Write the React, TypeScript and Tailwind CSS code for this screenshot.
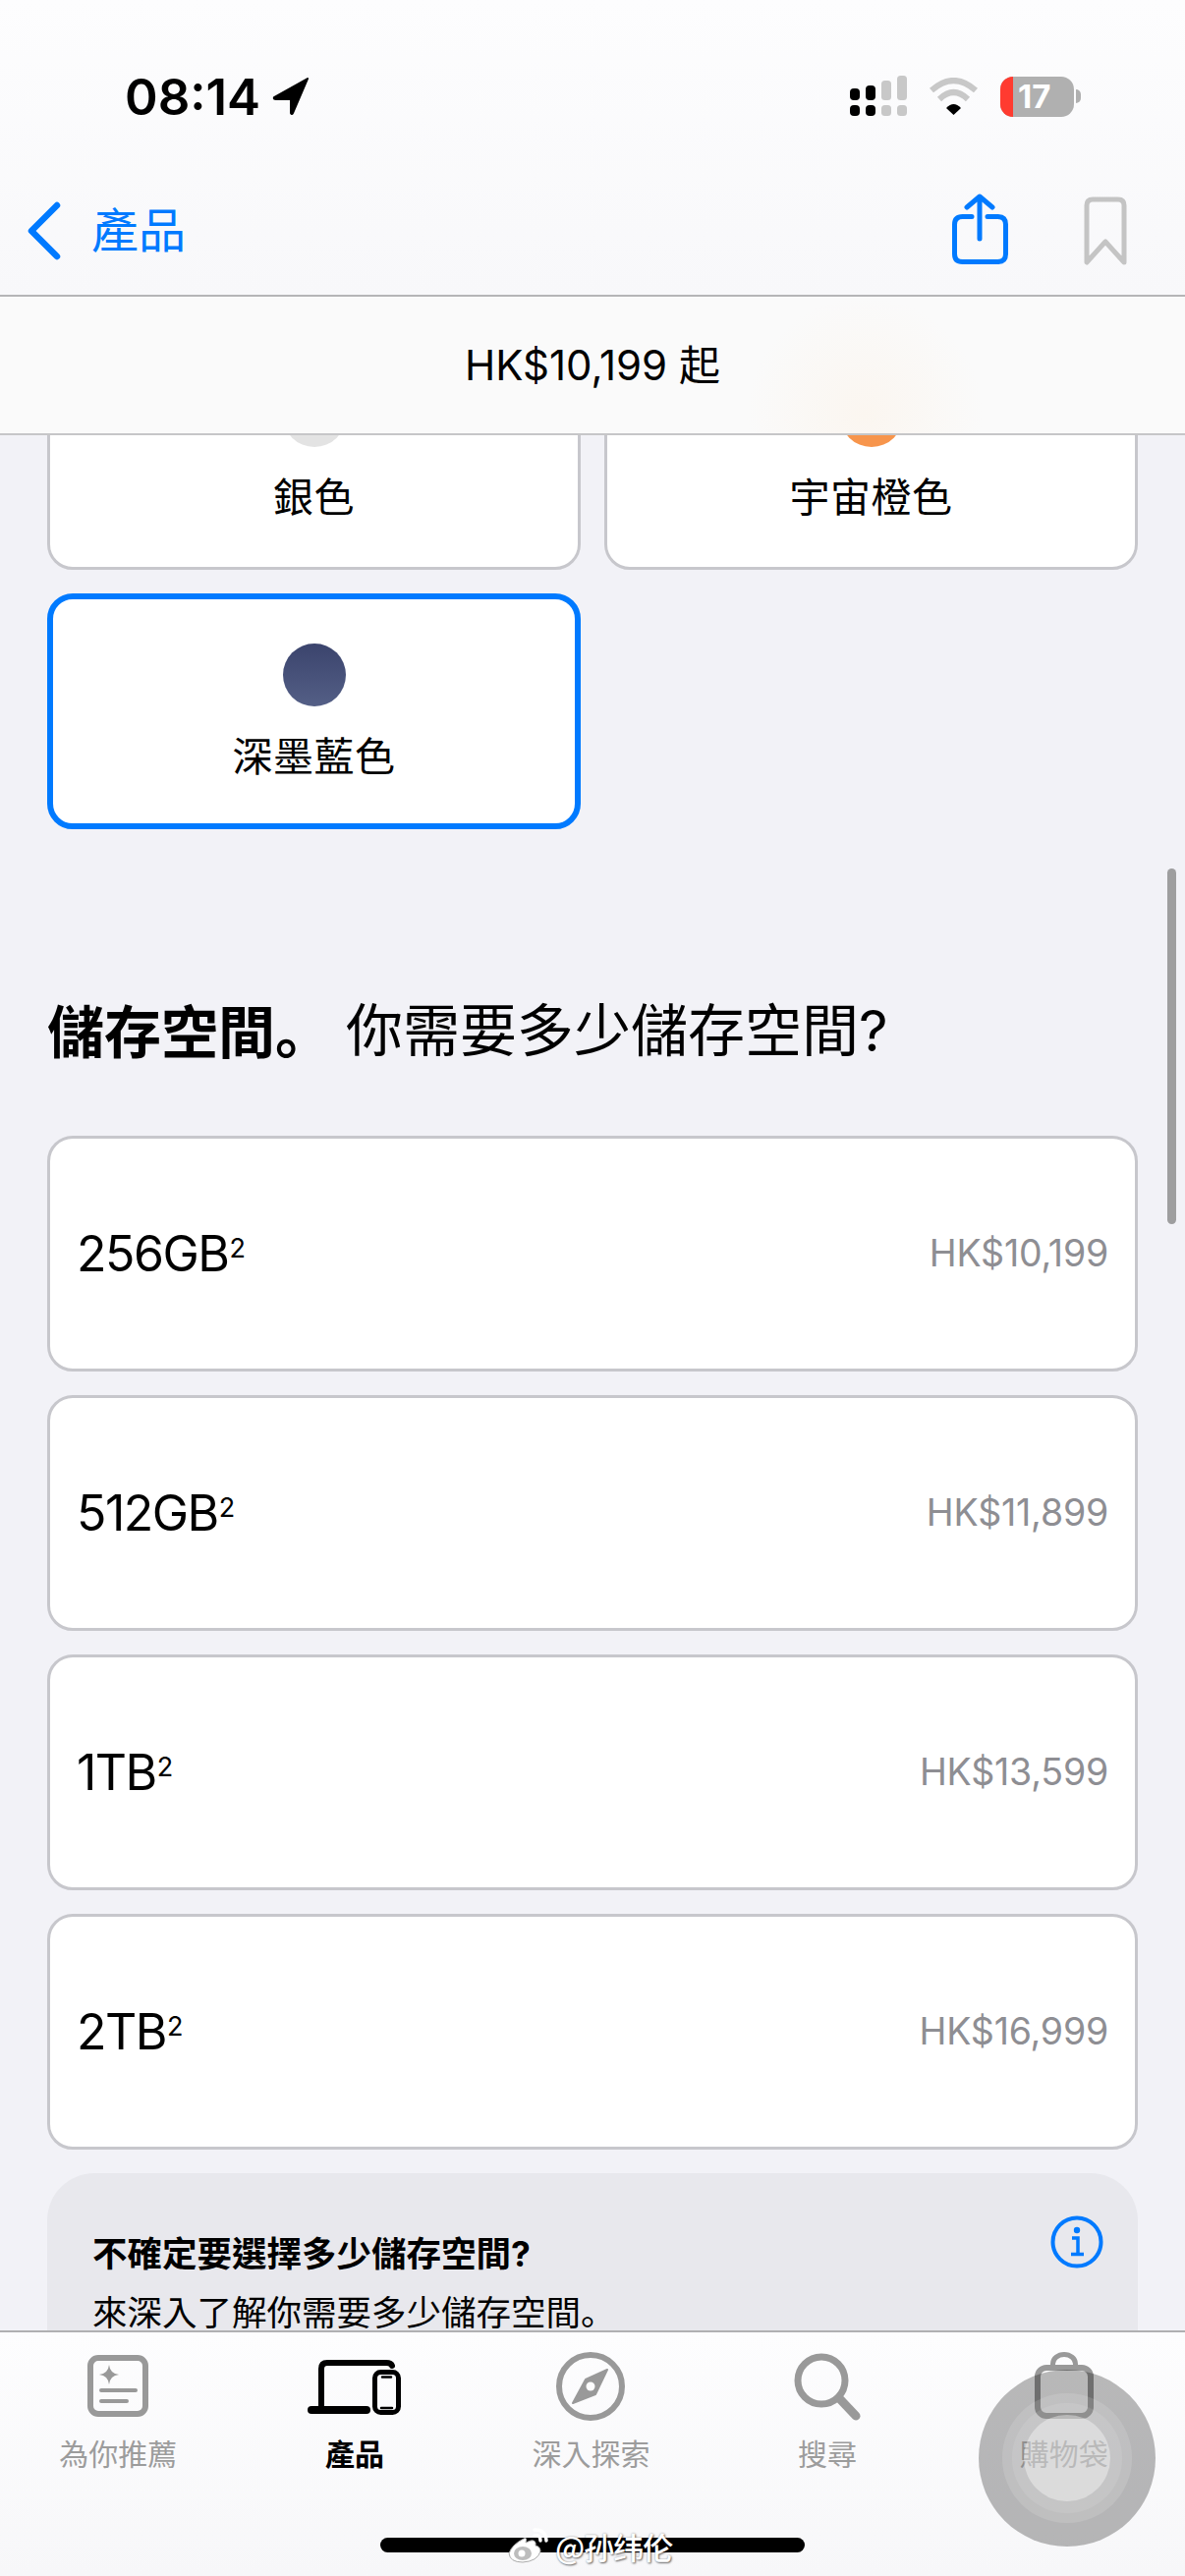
const COLORS = [
  { name: '銀色', swatch: 'bg-[#e3e3e3]' },
  { name: '宇宙橙色', swatch: 'bg-[#f7954c]' },
  { name: '深墨藍色', swatch: 'bg-gradient-to-b from-[#3b446d] to-[#545f86]', selected: true },
];

const STORAGE = [
  { size: '256GB', price: 'HK$10,199' },
  { size: '512GB', price: 'HK$11,899' },
  { size: '1TB', price: 'HK$13,599' },
  { size: '2TB', price: 'HK$16,999' },
];

function StatusBar() {
  return (
    <div className="mt-[72px] flex h-[52px] items-center justify-between pl-[127px] pr-[106px]">
      <div className="flex items-center gap-[12px]">
        <span className="text-[51px] font-semibold leading-none text-black">08:14</span>
        <svg className="h-[40px] w-[38px]" viewBox="0 0 38 40">
          <path d="M36 2 L2 21 Q1 23 4 23 L18 23 Q19 23 19 24 L19 37 Q20 39 21 37 Z" fill="#000" stroke="#000" strokeWidth="2" strokeLinejoin="round" />
        </svg>
      </div>
      <div className="flex items-center">
        <svg className="h-[42px] w-[58px]" viewBox="0 0 58 42">
          <rect x="0" y="13" width="10" height="12" rx="4" fill="#000" />
          <rect x="16" y="10" width="10" height="15" rx="4" fill="#000" />
          <rect x="32" y="5" width="10" height="20" rx="3.5" fill="#c8c8c8" />
          <rect x="48" y="0" width="10" height="25" rx="3.5" fill="#c8c8c8" />
          <rect x="0" y="30" width="10" height="11" rx="4" fill="#000" />
          <rect x="16" y="30" width="10" height="11" rx="4" fill="#000" />
          <rect x="32" y="30" width="10" height="11" rx="3.5" fill="#c8c8c8" />
          <rect x="48" y="30" width="10" height="11" rx="3.5" fill="#c8c8c8" />
        </svg>
        <svg className="ml-[22px] h-[38px] w-[51px]" viewBox="0 0 51 38">
          <path d="M3 13 Q25.5 -7 48 13" fill="none" stroke="#c8c8c8" strokeWidth="6" />
          <path d="M11 22 Q25.5 8 40 22" fill="none" stroke="#c8c8c8" strokeWidth="6" />
          <path d="M18 31 Q25.5 23 33 31 L25.5 38 Z" fill="#000" />
        </svg>
        <div className="ml-[22px] flex h-[41px] w-[75px] overflow-hidden rounded-[13px] bg-[#b0b0b0]">
          <div className="w-[13px] bg-[#ff3b30]" />
          <span className="pl-[5px] text-[33px] font-bold leading-[41px] text-white">17</span>
        </div>
        <div className="ml-[2px] h-[14px] w-[5px] rounded-r-full bg-[#b0b0b0]" />
      </div>
    </div>
  );
}

function NavBar() {
  return (
    <div className="mt-[66px] flex h-[90px] items-center justify-between pl-[27px] pr-[58px]">
      <div className="flex items-center">
        <svg className="h-[60px] w-[36px]" viewBox="0 0 36 60">
          <path d="M31 4 L5 30 L31 56" fill="none" stroke="#007aff" strokeWidth="6.5" strokeLinecap="round" strokeLinejoin="round" />
        </svg>
        <span className="ml-[30px] text-[48px] leading-none text-[#007aff]">產品</span>
      </div>
      <div className="flex items-center gap-[76px]">
        <svg className="h-[76px] w-[62px]" viewBox="0 0 62 76">
          <path d="M25 23.500 H15.500 Q7.500 23.500 7.500 31.500 V61.500 Q7.500 69.500 15.500 69.500 H51.500 Q59.500 69.500 59.500 61.500 V31.500 Q59.500 23.500 51.500 23.500 H41" fill="none" stroke="#007aff" strokeWidth="5" strokeLinecap="round" />
          <path d="M33 46 V3 M20 14 L33 3 L46 14" fill="none" stroke="#007aff" strokeWidth="5" strokeLinecap="round" strokeLinejoin="round" />
        </svg>
        <svg className="h-[72px] w-[46px]" viewBox="0 0 46 72">
          <path d="M4 68 V10 Q4 4 10 4 H36 Q42 4 42 10 V68 L23 47 Z" fill="none" stroke="#c4c4c4" strokeWidth="5" strokeLinecap="round" strokeLinejoin="round" />
        </svg>
      </div>
    </div>
  );
}

function ColorCard({ name, swatch, selected }: { name: string; swatch: string; selected?: boolean }) {
  return (
    <div
      className={
        selected
          ? 'flex h-[240px] flex-col items-center rounded-[26px] border-[6px] border-[#007aff] bg-white pt-[45px]'
          : 'flex h-[240px] flex-col items-center rounded-[26px] border-[3px] border-[#c7c7cc] bg-white pt-[48px]'
      }
    >
      <div className={`h-[64px] w-[64px] rounded-full ${swatch}`} />
      <span className="mt-[23px] text-[41px] leading-[56px] tracking-[0.5px] text-black">{name}</span>
    </div>
  );
}

function StorageCard({ size, price }: { size: string; price: string }) {
  return (
    <div className="flex h-[240px] items-center justify-between rounded-[26px] border-[3px] border-[#c7c7cc] bg-white pl-[27px] pr-[27px]">
      <span className="text-[50px] leading-none tracking-[-1.5px] text-black">
        {size}
        <sup className="top-0 ml-[1px] align-[14px] text-[27px] leading-none tracking-normal">2</sup>
      </span>
      <span className="text-[37.5px] leading-none tracking-[-0.2px] text-[#8e8e93]">{price}</span>
    </div>
  );
}

function TabIcon({ children }: { children: React.ReactNode }) {
  return (
    <svg className="h-[72px] w-[100px]" viewBox="0 0 100 72">
      {children}
    </svg>
  );
}

function Tab({ label, active, children }: { label: string; active?: boolean; children: React.ReactNode }) {
  return (
    <div className="flex flex-col items-center">
      <TabIcon>{children}</TabIcon>
      <span className={active ? 'mt-[14px] text-[30px] font-semibold leading-[36px] text-black' : 'mt-[14px] text-[30px] leading-[36px] text-[#9c9c9c]'}>
        {label}
      </span>
    </div>
  );
}

function TabBar() {
  return (
    <div className="relative z-10 h-[250px] shrink-0 border-t-2 border-[#b0b0b2] bg-gradient-to-b from-[#fdfdfe] to-[#f7f7f9] pt-[20px]">
      <div className="grid grid-cols-5 pr-[3px]">
        <Tab label="為你推薦">
          <rect x="22" y="6" width="56" height="57" rx="8" fill="none" stroke="#999" strokeWidth="6" />
          <path d="M41 13 Q42 22 51 23 Q42 24 41 33 Q40 24 31 23 Q40 22 41 13 Z" fill="#999" />
          <path d="M33 39 H68 M33 50 H59" stroke="#999" strokeWidth="4" strokeLinecap="round" />
        </Tab>
        <Tab label="產品" active>
          <path d="M16 56 V17 Q16 11 22 11 H82 Q87 11 88 14" fill="none" stroke="#000" strokeWidth="6" strokeLinecap="round" />
          <path d="M6 59 H62" stroke="#000" strokeWidth="8" strokeLinecap="round" />
          <rect x="70.5" y="20.5" width="24" height="41" rx="6" fill="none" stroke="#000" strokeWidth="5" />
          <path d="M78 25.5 H87 M77 57 H88" stroke="#000" strokeWidth="2.5" strokeLinecap="round" />
        </Tab>
        <Tab label="深入探索">
          <circle cx="50" cy="35" r="32" fill="none" stroke="#999" strokeWidth="6" />
          <path d="M67 18 L45 28 L32 52 L55 43 Z" fill="#999" stroke="#999" strokeWidth="2" strokeLinejoin="round" />
          <circle cx="50" cy="35" r="4.5" fill="#fdfdfe" />
        </Tab>
        <Tab label="搜尋">
          <circle cx="44" cy="29" r="24" fill="none" stroke="#999" strokeWidth="7" />
          <path d="M62 47 L79 65" stroke="#999" strokeWidth="9" strokeLinecap="round" />
        </Tab>
        <Tab label="購物袋">
          <rect x="23" y="16" width="54" height="49" rx="9" fill="none" stroke="#999" strokeWidth="6" />
          <path d="M38.500 14 V12 A11.500 9.500 0 0 1 61.500 12 V14" fill="none" stroke="#999" strokeWidth="5" />
        </Tab>
      </div>
      {/* home indicator */}
      <div className="absolute left-[387px] top-[209px] h-[15px] w-[432px] rounded-full bg-black" />
    </div>
  );
}

// assistive touch button floating over the tab bar
function FloatingButton() {
  return (
    <div className="absolute left-[996px] top-[2412px] z-20 flex h-[180px] w-[180px] items-center justify-center rounded-full bg-black/[0.27]">
      <div className="flex h-[132px] w-[132px] items-center justify-center rounded-full bg-white/[0.13]">
        <div className="flex h-[112px] w-[112px] items-center justify-center rounded-full bg-white/[0.1]">
          <div className="h-[88px] w-[88px] rounded-full bg-white/[0.38]" />
        </div>
      </div>
    </div>
  );
}

function Watermark() {
  return (
    <div className="absolute left-[517px] top-[2572px] z-20 flex items-center">
      <svg className="h-[38px] w-[42px]" viewBox="0 0 42 38">
        <path d="M27 3 Q38 2 39 14 M27 9 Q33 8 33 14" fill="none" stroke="#fff" strokeWidth="3.500" strokeLinecap="round" />
        <path d="M16 12 Q4 18 1 27 Q2 36 15 36 Q30 35 33 25 Q33 20 28 19 Q29 13 23 14 L18 16 Q20 10 16 12 Z" fill="#fff" stroke="#aaa" strokeWidth="1" />
        <ellipse cx="15" cy="27" rx="9" ry="7" fill="#bdbdbd" />
        <circle cx="14" cy="27" r="3.500" fill="#fff" />
      </svg>
      <span className="ml-[6px] text-[31px] font-medium leading-none tracking-[-1px] text-white [font-family:'Noto_Sans_CJK_SC',sans-serif] [text-shadow:1px_1px_2px_rgba(0,0,0,0.55),0_0_2px_rgba(0,0,0,0.35)]">
        @孙纬伦
      </span>
    </div>
  );
}

export default function App() {
  return (
    <div className="relative flex h-[2622px] w-[1206px] flex-col overflow-hidden bg-[#f2f2f7] [font-family:Inter,'Noto_Sans_CJK_TC',sans-serif]">
      <header className="relative z-10 shrink-0">
        <div className="h-[302px] overflow-hidden border-b-2 border-[#b5b5b7] bg-gradient-to-b from-[#fdfdfe] to-[#f8f8fa]">
          <StatusBar />
          <NavBar />
        </div>
        <div className="flex h-[141px] items-center justify-center border-b-2 border-[#c6c6c8] bg-[#fafafa] bg-[radial-gradient(circle_at_880px_120px,#fbf6f0_0,#fafafa_120px)]">
          <span className="text-[42px] leading-none text-black">HK$10,199 起</span>
        </div>
      </header>

      {/* content scrolls under both bars */}
      <main className="min-h-0 flex-1 px-[48px]">
        <div className="-mt-[103px] grid grid-cols-2 gap-[24px]">
          {COLORS.map((c) => (
            <ColorCard key={c.name} {...c} />
          ))}
        </div>

        <h2 className="mt-[165px] flex h-[80px] items-center text-[58px] leading-[80px] text-black">
          <span className="font-bold">
            儲存空間<span className="[font-family:'Noto_Sans_CJK_SC',sans-serif]">。</span>
          </span>
          <span className="ml-[14px]">你需要多少儲存空間?</span>
        </h2>

        <div className="mt-[67px] flex flex-col gap-[24px]">
          {STORAGE.map((s) => (
            <StorageCard key={s.size} {...s} />
          ))}
        </div>

        <div className="relative mt-[24px] h-[300px] rounded-[48px] bg-[#e8e8ed] pl-[46px] pt-[65px]">
          <p className="text-[35.5px] font-bold leading-[36px] text-black">不確定要選擇多少儲存空間?</p>
          <p className="mt-[21px] text-[35.5px] leading-[36px] text-black">
            來深入了解你需要多少儲存空間<span className="[font-family:'Noto_Sans_CJK_SC',sans-serif]">。</span>
          </p>
          <svg className="absolute right-[35px] top-[43px] h-[54px] w-[54px]" viewBox="0 0 54 54">
            <circle cx="27" cy="27" r="24.500" fill="none" stroke="#007aff" strokeWidth="4" />
            <circle cx="27" cy="15" r="3.200" fill="#007aff" />
            <path d="M22 23 H28 V39 M21 39.500 H34" fill="none" stroke="#007aff" strokeWidth="3.500" />
          </svg>
        </div>
      </main>

      <TabBar />

      {/* scroll indicator */}
      <div className="absolute left-[1188px] top-[884px] h-[362px] w-[9px] rounded-full bg-[#9e9e9f]" />
      <FloatingButton />
      <Watermark />
    </div>
  );
}
